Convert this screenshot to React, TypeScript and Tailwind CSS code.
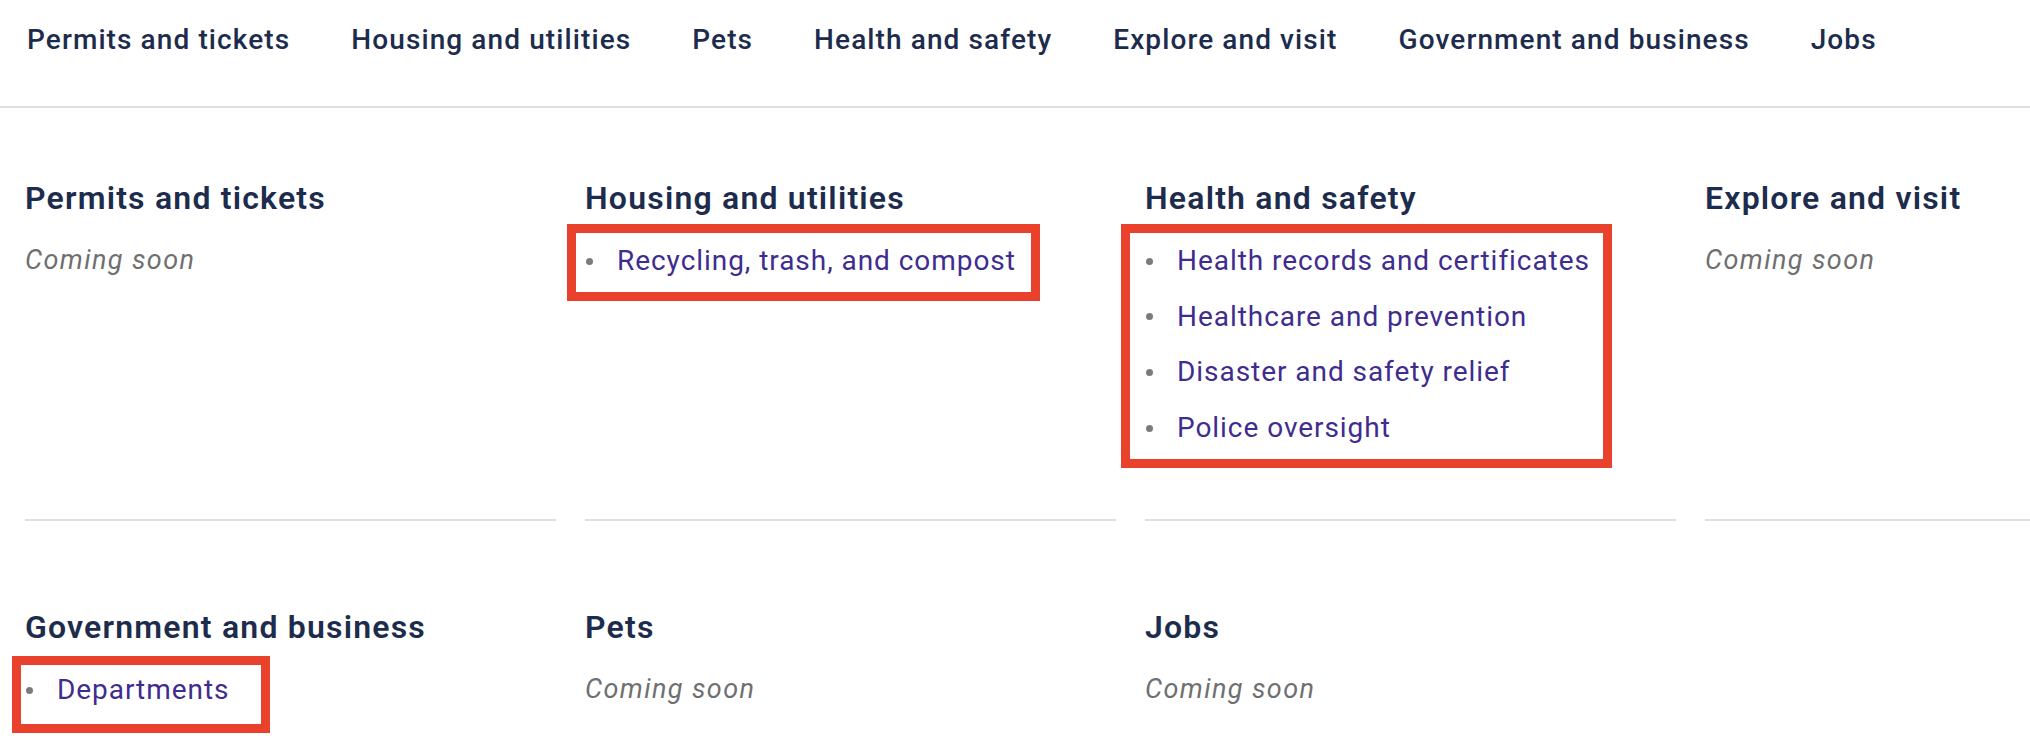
import React from "react";

type Section = {
  title: string;
  links: string[];
  // hand-drawn highlight box around the list, offsets relative to the list
  box?: { left: number; right: number; top: number; bottom: number };
};

const NAV = [
  "Permits and tickets",
  "Housing and utilities",
  "Pets",
  "Health and safety",
  "Explore and visit",
  "Government and business",
  "Jobs",
];

const SECTIONS: Section[] = [
  { title: "Permits and tickets", links: [] },
  {
    title: "Housing and utilities",
    links: ["Recycling, trash, and compost"],
    box: { left: -18, right: -24, top: -17, bottom: -20 },
  },
  {
    title: "Health and safety",
    links: [
      "Health records and certificates",
      "Healthcare and prevention",
      "Disaster and safety relief",
      "Police oversight",
    ],
    box: { left: -24, right: -22, top: -17, bottom: -20 },
  },
  { title: "Explore and visit", links: [] },
  {
    title: "Government and business",
    links: ["Departments"],
    box: { left: -13, right: -41, top: -14, bottom: -23 },
  },
  { title: "Pets", links: [] },
  { title: "Jobs", links: [] },
];

function SectionCell({ section, firstRow }: { section: Section; firstRow: boolean }) {
  const hasLinks = section.links.length > 0;
  return (
    <div className={firstRow ? "pb-[71px] border-b-2 border-[#dde1e6]" : ""}>
      <h2 className="text-[32px] leading-[40px] font-semibold text-[#1d2c4c] tracking-[1.2px]">{section.title}</h2>
      <div className={hasLinks ? "mt-[23px]" : "mt-[22px]"}>
        {!hasLinks ? (
          <p className="text-[27px] leading-[40px] italic text-[#6f6f6f] tracking-[1.4px]">Coming soon</p>
        ) : (
          <div className="relative w-fit">
            <ul className="flex flex-col gap-[15.7px]">
              {section.links.map((link) => (
                <li key={link} className="flex items-center h-[40px]">
                  <span className="w-[7px] h-[7px] rounded-full bg-[#7b7b7b] ml-[1px] mr-[24px] shrink-0" />
                  <a href="#" className="text-[28px] leading-[40px] text-[#3f2c8f] whitespace-nowrap tracking-[0.95px]">
                    {link}
                  </a>
                </li>
              ))}
            </ul>
            {section.box && (
              <span
                className="absolute border-[9px] border-[#e9412b] pointer-events-none"
                style={{
                  left: section.box.left,
                  right: section.box.right,
                  top: section.box.top,
                  bottom: section.box.bottom,
                }}
              />
            )}
          </div>
        )}
      </div>
    </div>
  );
}

export default function App() {
  return (
    <div className="w-[2030px] h-[756px] overflow-hidden bg-white font-['Roboto','Noto_Sans',sans-serif]">
      {/* Top nav */}
      <nav className="h-[108px] border-b-2 border-[#dde1e6]">
        <ul className="flex gap-[61px] pl-[27px] pt-[21px]">
          {NAV.map((item) => (
            <li key={item} className="text-[28px] leading-[38px] font-medium text-[#1d2c4c] whitespace-nowrap tracking-[1.1px]">
              {item}
            </li>
          ))}
        </ul>
      </nav>

      {/* Section grid */}
      <div className="pl-[25px] pt-[70px] grid grid-cols-[repeat(4,531px)] gap-x-[29px] gap-y-[86px]">
        {SECTIONS.map((s, i) => (
          <SectionCell key={s.title} section={s} firstRow={i < 4} />
        ))}
      </div>
    </div>
  );
}
